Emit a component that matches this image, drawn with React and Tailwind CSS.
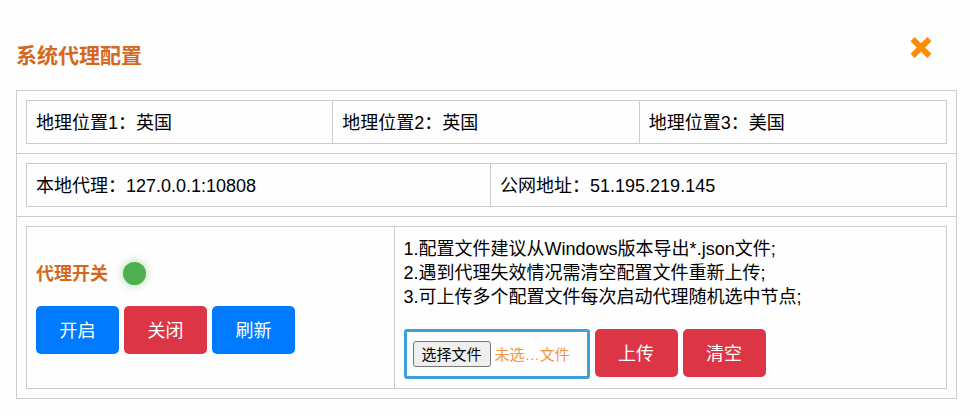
const locations = [
  { label: '地理位置1', value: '英国' },
  { label: '地理位置2', value: '英国' },
  { label: '地理位置3', value: '美国' },
];

const addresses = [
  { label: '本地代理', value: '127.0.0.1:10808' },
  { label: '公网地址', value: '51.195.219.145' },
];

const notes = [
  '1.配置文件建议从Windows版本导出*.json文件;',
  '2.遇到代理失效情况需清空配置文件重新上传;',
  '3.可上传多个配置文件每次启动代理随机选中节点;',
];

const tones = {
  blue: 'bg-[#007bff] hover:bg-[#0069d9]',
  red: 'bg-[#dc3545] hover:bg-[#c82333]',
};

function ActionButton({ tone, children }) {
  return (
    <button
      type="button"
      className={`w-[83px] cursor-pointer rounded-[5px] pt-[13px] pb-[11px] text-white ${tones[tone]}`}
    >
      {children}
    </button>
  );
}

function InfoRow({ items, columns }) {
  return (
    <div className="p-[9px]">
      <dl className={`grid divide-x divide-[#ccc] border border-[#ccc] ${columns}`}>
        {items.map((item) => (
          <div key={item.label} className="flex px-[9px] pt-2.5 pb-2">
            <dt>{item.label}：</dt>
            <dd>{item.value}</dd>
          </div>
        ))}
      </dl>
    </div>
  );
}

function FilePicker() {
  return (
    <label className="flex h-[50px] w-[186px] cursor-pointer items-center gap-1 rounded-[3px] border-3 border-[#409fd8] px-1.5 text-[15px] focus-within:outline-2">
      <input type="file" accept=".json" multiple className="sr-only" />
      <span className="shrink-0 rounded-[3px] border border-[#767676] bg-[#efefef] px-2 pt-px leading-[23px] text-black">
        选择文件
      </span>
      <span className="pt-0.5 whitespace-nowrap text-[#f2953c]">
        未选<span lang="en" className="font-['Liberation_Sans',sans-serif]">…</span>文件
      </span>
    </label>
  );
}

export default function App() {
  return (
    <main
      lang="zh-CN"
      className="min-h-screen bg-[#fefefe] pr-[13px] pb-4 pl-4 font-['Liberation_Sans','Noto_Sans_CJK_SC',sans-serif] text-[18px] leading-6 text-black"
    >
      <header className="flex items-start justify-between pt-9 pr-6 pb-5">
        <h1 className="pt-1.5 text-[21px] leading-7 font-bold text-[#d2691e]">系统代理配置</h1>
        <button type="button" aria-label="关闭窗口" className="size-6 cursor-pointer text-[#ff8c00]">
          <svg viewBox="0 0 24 24" className="size-6" aria-hidden="true">
            <path d="M3.6 3.1 20.4 19.9M20.4 3.1 3.6 19.9" stroke="currentColor" strokeWidth="5.8" fill="none" />
          </svg>
        </button>
      </header>

      <div className="divide-y divide-[#ccc] border border-[#ccc]">
        <InfoRow items={locations} columns="grid-cols-3" />
        <InfoRow items={addresses} columns="grid-cols-[51fr_50fr]" />

        <div className="p-[9px]">
          <div className="grid grid-cols-[2fr_3fr] divide-x divide-[#ccc] border border-[#ccc]">
            <section className="flex flex-col justify-center gap-5 p-[9px]">
              <div className="flex items-center gap-[15px]">
                <h2 className="font-bold text-[#d2691e]">代理开关</h2>
                <span
                  role="img"
                  aria-label="代理已开启"
                  className="size-[23px] rounded-full bg-[#4caf50] shadow-[0_0_10px_rgba(76,175,80,0.5)]"
                />
              </div>
              <div className="flex flex-wrap gap-[5px]">
                <ActionButton tone="blue">开启</ActionButton>
                <ActionButton tone="red">关闭</ActionButton>
                <ActionButton tone="blue">刷新</ActionButton>
              </div>
            </section>

            <section className="flex flex-col gap-5 px-[9px] pt-2.5 pb-[9px]">
              <ul>
                {notes.map((note) => (
                  <li key={note}>{note}</li>
                ))}
              </ul>
              <div className="flex flex-wrap items-start gap-[5px]">
                <FilePicker />
                <ActionButton tone="red">上传</ActionButton>
                <ActionButton tone="red">清空</ActionButton>
              </div>
            </section>
          </div>
        </div>
      </div>
    </main>
  );
}
